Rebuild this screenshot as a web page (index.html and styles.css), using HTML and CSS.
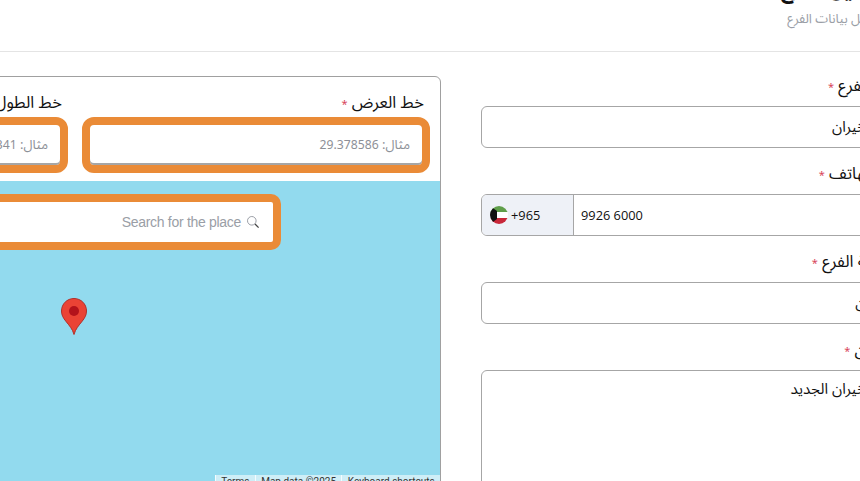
FILE: index.html
```html
<!DOCTYPE html>
<html lang="ar" dir="rtl">
<head>
<meta charset="utf-8">
<title>تعديل بيانات الفرع</title>
<link rel="stylesheet" href="styles.css">
</head>
<body>
<div class="page">
  <header class="head">
    <h1 class="title">تعديل الفرع</h1>
    <p class="sub">تعديل بيانات الفرع</p>
  </header>
  <main class="cols">
    <section class="form">
      <div class="field">
        <label class="label">اسم الفرع <span class="req">*</span></label>
        <div class="input">الخيران</div>
      </div>
      <div class="field">
        <label class="label">رقم الهاتف <span class="req">*</span></label>
        <div class="phone" dir="ltr">
          <div class="code">
            <svg class="flag" viewBox="0 0 18 18" width="18" height="18">
              <clipPath id="c"><circle cx="9" cy="9" r="9"/></clipPath>
              <g clip-path="url(#c)">
                <rect width="18" height="6" fill="#5f9e4a"/>
                <rect y="6" width="18" height="6" fill="#fff"/>
                <rect y="12" width="18" height="6" fill="#c8283a"/>
                <path d="M0 0L7 5V13L0 18Z" fill="#111"/>
              </g>
            </svg>
            <span>+965</span>
          </div>
          <div class="num">9926 6000</div>
        </div>
      </div>
      <div class="field">
        <label class="label">منطقة الفرع <span class="req">*</span></label>
        <div class="input short">عدن</div>
      </div>
      <div class="field">
        <label class="label">العنوان <span class="req">*</span></label>
        <div class="input area">الخيران الجديد</div>
      </div>
    </section>
    <section class="card">
      <div class="coords">
        <div class="coord">
          <label class="label small">خط العرض <span class="req">*</span></label>
          <div class="mark">مثال: <span class="digits">29.378586</span></div>
        </div>
        <div class="coord second">
          <label class="label small">خط الطول <span class="req">*</span></label>
          <div class="mark">مثال: <span class="digits">47.990341</span></div>
        </div>
      </div>
      <div class="map">
        <div class="search" dir="ltr">
          <span class="ph">Search for the place</span>
          <svg class="lens" viewBox="0 0 14 14" width="14" height="14">
            <circle cx="5.8" cy="5.8" r="4.3" fill="none" stroke="#9a9ea6" stroke-width="1"/>
            <path d="M9 9L12.6 12.6" stroke="#444" stroke-width="1.3"/>
          </svg>
        </div>
        <svg class="pin" viewBox="0 0 26 37" width="26" height="37">
          <path d="M13 .5C6 .5.5 6 .5 13c0 4 1.6 6.8 4.3 10.2C8 27.2 11.6 31 13 36.5c1.400-5.500 5-9.300 8.200-13.300C23.900 19.800 25.500 17 25.500 13 25.500 6 20 .5 13 .5Z" fill="#ea4335" stroke="#b0302a"/>
          <circle cx="13" cy="13" r="5" fill="#b3131b"/>
        </svg>
        <div class="attr" dir="ltr">
          <span>Terms</span><span>Map data ©2025</span><span>Keyboard shortcuts</span>
        </div>
      </div>
    </section>
  </main>
</div>
</body>
</html>
```

FILE: styles.css
```css
html, body { margin: 0; padding: 0; height: 481px; overflow: hidden; background: #fff; }
body { direction: ltr; font-family: "Noto Sans Arabic", "Noto Sans", "DejaVu Sans", sans-serif; color: #111; }
.page { direction: rtl; width: 1220px; margin-left: -300px; }
.head { height: 51px; border-bottom: 1px solid #e4e4e4; padding-right: 38px; text-align: right; overflow: hidden; }
.title { margin: -22px 0 0; font-size: 20px; line-height: 24px; font-weight: 700; }
.sub { margin: 8px 0 0; font-size: 13px; line-height: 18px; color: #9a9ea6; }
.cols { display: flex; gap: 40px; padding: 24px 9px 0 0; }
.form { width: 430px; flex: none; display: flex; flex-direction: column; }
.field { margin-bottom: 16px; }
.label { display: block; height: 20px; font-size: 16.5px; line-height: 20px; margin: 0 11px 10px 0; white-space: nowrap; }
.req { color: #d8455a; font-size: 11px; line-height: 12px; }
.input { box-sizing: border-box; height: 42px; border: 1px solid #a6a6a6; border-radius: 6px; padding: 0 36px; font-size: 15px; line-height: 40px; }
.input.short { padding-right: 29px; }
.area { height: 130px; line-height: 36px; }
.phone { display: flex; height: 42px; box-sizing: border-box; border: 1px solid #a6a6a6; border-radius: 6px; overflow: hidden; font-family: "Open Sans", sans-serif; font-size: 12.8px; line-height: 40px; }
.code { width: 92px; flex: none; box-sizing: border-box; background: #eef1f7; border-right: 1px solid #a6a6a6; display: flex; align-items: center; gap: 3px; padding-left: 8px; }
.flag { display: block; }
.num { padding-left: 7px; }
.card { width: 740px; flex: none; box-sizing: border-box; height: 500px; border: 1px solid #a0a0a0; border-radius: 6px; overflow: hidden; }
.coords { display: flex; gap: 14px; padding: 14px 10px 0 0; height: 104px; box-sizing: border-box; }
.coord { width: 348px; flex: none; }
.second .mark { margin-top: 1px; }
.label.small { height: 24px; margin: 0 6px 2px 0; line-height: 24px; }
.mark { box-sizing: border-box; height: 56px; border: 8px solid #ea8b37; border-radius: 12px; box-shadow: inset 0 -2px 0 #a6a6a6; padding: 0 12px; font-size: 13px; line-height: 40px; color: #8d9097; background: #fff; }
.digits { font-size: 12.2px; }
.map { position: relative; height: 320px; background: #92daee; }
.search { position: absolute; top: 13px; right: 159px; width: 400px; height: 56px; box-sizing: border-box; border: 8px solid #ea8b37; border-radius: 10px; background: #fff; display: flex; align-items: center; justify-content: flex-end; gap: 5px; padding-right: 13px; }
.ph { font-family: "Liberation Sans", sans-serif; font-size: 14px; letter-spacing: -0.3px; color: #9a9ea6; }
.lens { display: block; }
.pin { position: absolute; top: 117px; right: 353px; }
.attr { position: absolute; top: 294px; right: 0; display: flex; background: rgba(255,255,255,.55); font-family: "Roboto", sans-serif; font-size: 10px; line-height: 14px; color: #333; }
.attr span { padding: 0 5.400px; border-left: 1px solid rgba(255,255,255,.8); }
```
